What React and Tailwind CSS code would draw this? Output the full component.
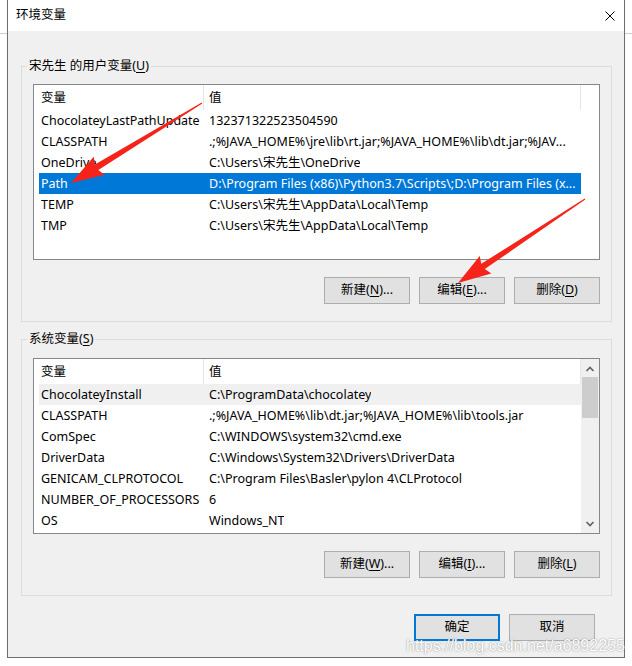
import clsx from 'clsx';

const userVars = [
  ['ChocolateyLastPathUpdate', '132371322523504590'],
  ['CLASSPATH', '.;%JAVA_HOME%\\jre\\lib\\rt.jar;%JAVA_HOME%\\lib\\dt.jar;%JAV...'],
  ['OneDrive', 'C:\\Users\\宋先生\\OneDrive'],
  ['Path', 'D:\\Program Files (x86)\\Python3.7\\Scripts\\;D:\\Program Files (x...'],
  ['TEMP', 'C:\\Users\\宋先生\\AppData\\Local\\Temp'],
  ['TMP', 'C:\\Users\\宋先生\\AppData\\Local\\Temp'],
];

const sysVars = [
  ['ChocolateyInstall', 'C:\\ProgramData\\chocolatey'],
  ['CLASSPATH', '.;%JAVA_HOME%\\lib\\dt.jar;%JAVA_HOME%\\lib\\tools.jar'],
  ['ComSpec', 'C:\\WINDOWS\\system32\\cmd.exe'],
  ['DriverData', 'C:\\Windows\\System32\\Drivers\\DriverData'],
  ['GENICAM_CLPROTOCOL', 'C:\\Program Files\\Basler\\pylon 4\\CLProtocol'],
  ['NUMBER_OF_PROCESSORS', '6'],
  ['OS', 'Windows_NT'],
];

// tapered red annotation arrow, tail -> tip
function arrowPoints(x1, y1, x2, y2) {
  const dx = x2 - x1;
  const dy = y2 - y1;
  const len = Math.hypot(dx, dy);
  const ux = dx / len;
  const uy = dy / len;
  const px = -uy;
  const py = ux;
  const headL = 30;
  const bx = x2 - ux * headL;
  const by = y2 - uy * headL;
  const pt = (x, y, w) => `${(x + px * w).toFixed(1)},${(y + py * w).toFixed(1)}`;
  return [
    pt(x1, y1, 0.6),
    pt(bx, by, 3.2),
    pt(bx - ux * 3, by - uy * 3, 10.5),
    `${x2},${y2}`,
    pt(bx - ux * 3, by - uy * 3, -10.5),
    pt(bx, by, -3.2),
    pt(x1, y1, -0.6),
  ].join(' ');
}

function Chevron({ down }) {
  return (
    <svg width="10" height="6" viewBox="0 0 10 6">
      <path
        d={down ? 'M1.5 1 L5 4.5 L8.5 1' : 'M1.5 5 L5 1.5 L8.5 5'}
        stroke="#606060"
        strokeWidth="1.6"
        fill="none"
      />
    </svg>
  );
}

function Scrollbar() {
  return (
    <div className="flex w-[18px] flex-col bg-[#f0f0f0]">
      <div className="flex h-[18px] items-center justify-center pt-[2px]">
        <Chevron />
      </div>
      <div className="mx-[1px] h-[41px] bg-[#cdcdcd]" />
      <div className="flex-1" />
      <div className="flex h-[18px] items-center justify-center">
        <Chevron down />
      </div>
    </div>
  );
}

function VarList({ rows, selected, hovered, scroll }) {
  return (
    <div className="flex h-[176px] border border-[#828790] bg-white">
      <div className="w-[547px] overflow-hidden">
        <div className="flex h-[25px]">
          <div className="w-[170px] border-r border-[#e5e5e5] pl-[7px] leading-[25px]">变量</div>
          <div className="w-[377px] border-r border-[#e5e5e5] pl-[5px] leading-[25px]">值</div>
        </div>
        {rows.map(([name, value], i) => (
          <div
            key={name}
            className={clsx(
              'ml-[5px] flex h-[21px] w-[542px] items-center leading-[21px]',
              i === selected && 'bg-[#0078d7] text-white',
              i === hovered && 'bg-[#f0f0f0]'
            )}
          >
            <div className="w-[164px] shrink-0 overflow-hidden whitespace-nowrap pl-[2px]">{name}</div>
            <div className="overflow-hidden whitespace-nowrap pl-[6px]">{value}</div>
          </div>
        ))}
      </div>
      {scroll ? <Scrollbar /> : <div className="w-[18px]" />}
    </div>
  );
}

function Btn({ children, primary }) {
  return (
    <button
      className={clsx(
        'flex h-[27px] w-[86px] items-center justify-center bg-[#e1e1e1] text-black',
        primary ? 'border-2 border-[#0078d7]' : 'border border-[#adadad]'
      )}
    >
      {children}
    </button>
  );
}

const Key = ({ children }) => <span className="underline underline-offset-2">{children}</span>;

export default function App() {
  return (
    <div className="relative h-[666px] w-[632px] overflow-hidden bg-white font-['Noto_Sans','Noto_Sans_CJK_SC',sans-serif] text-[12.5px] text-black">
      <div className="absolute left-0 right-0 top-[33px] h-px bg-[#cccccc]" />

      <div className="relative ml-[7px] flex h-[658px] w-[618px] flex-col border-x border-b border-[#6d6d6d] bg-[#f0f0f0]">
        <div className="flex h-[31px] items-center justify-between bg-white pl-[8px] pr-[9px]">
          <span>环境变量</span>
          <svg width="10" height="10" viewBox="0 0 10 10">
            <path d="M0.5 0.5 L9.5 9.5 M9.5 0.5 L0.5 9.5" stroke="#000" strokeWidth="1" />
          </svg>
        </div>

        <div className="flex flex-1 flex-col pl-[13px] pr-[12px] pt-[27px]">
          <fieldset className="border border-[#dcdcdc]">
            <legend className="ml-[5px] px-[2px] leading-[16px]">
              宋先生 的用户变量(<Key>U</Key>)
            </legend>
            <div className="px-[11px] pb-[17px] pt-[10px]">
              <VarList rows={userVars} selected={3} />
              <div className="mt-[17px] flex justify-end gap-[9px]">
                <Btn>新建(<Key>N</Key>)...</Btn>
                <Btn>编辑(<Key>E</Key>)...</Btn>
                <Btn>删除(<Key>D</Key>)</Btn>
              </div>
            </div>
          </fieldset>

          <fieldset className="mt-[9px] border border-[#dcdcdc]">
            <legend className="ml-[5px] px-[2px] leading-[16px]">
              系统变量(<Key>S</Key>)
            </legend>
            <div className="px-[11px] pb-[17px] pt-[11px]">
              <VarList rows={sysVars} hovered={0} scroll />
              <div className="mt-[17px] flex justify-end gap-[9px]">
                <Btn>新建(<Key>W</Key>)...</Btn>
                <Btn>编辑(<Key>I</Key>)...</Btn>
                <Btn>删除(<Key>L</Key>)</Btn>
              </div>
            </div>
          </fieldset>

          <div className="mr-[17px] mt-[18px] flex justify-end gap-[9px]">
            <Btn primary>确定</Btn>
            <Btn>取消</Btn>
          </div>
        </div>
      </div>

      <div className="pointer-events-none absolute left-[406px] top-[636px] font-['Liberation_Sans',sans-serif] text-[16px] leading-[20px] text-white [text-shadow:0_0_1.5px_#777]">
        https://blog.csdn.net/a6892255
      </div>

      <svg className="pointer-events-none absolute inset-0" width="632" height="666">
        <polygon points={arrowPoints(202, 103, 71, 183)} fill="#f5231a" />
        <polygon points={arrowPoints(585, 199, 458, 283)} fill="#f5231a" />
      </svg>
    </div>
  );
}
